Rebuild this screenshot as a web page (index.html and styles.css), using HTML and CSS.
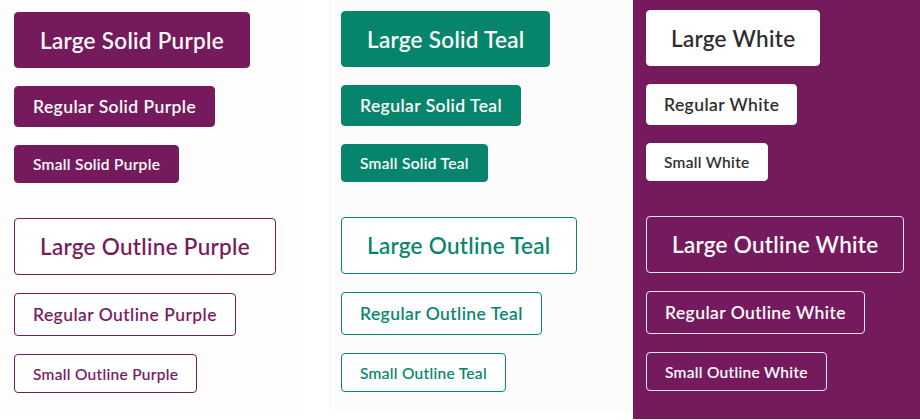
FILE: index.html
```html
<!DOCTYPE html>
<html>
<head>
<meta charset="utf-8">
<link rel="stylesheet" href="styles.css">
</head>
<body>
<div class="page">
  <section class="panel panel-left">
    <button class="btn lg solid-purple">Large Solid Purple</button>
    <button class="btn md solid-purple">Regular Solid Purple</button>
    <button class="btn sm solid-purple">Small Solid Purple</button>
    <button class="btn lg outline outline-purple group-start">Large Outline Purple</button>
    <button class="btn md outline outline-purple">Regular Outline Purple</button>
    <button class="btn sm outline outline-purple">Small Outline Purple</button>
  </section>
  <section class="panel panel-mid">
    <button class="btn lg solid-teal">Large Solid Teal</button>
    <button class="btn md solid-teal">Regular Solid Teal</button>
    <button class="btn sm solid-teal">Small Solid Teal</button>
    <button class="btn lg outline outline-teal group-start">Large Outline Teal</button>
    <button class="btn md outline outline-teal">Regular Outline Teal</button>
    <button class="btn sm outline outline-teal">Small Outline Teal</button>
  </section>
  <section class="panel panel-right">
    <button class="btn lg solid-white">Large White</button>
    <button class="btn md solid-white">Regular White</button>
    <button class="btn sm solid-white">Small White</button>
    <button class="btn lg outline outline-white group-start">Large Outline White</button>
    <button class="btn md outline outline-white">Regular Outline White</button>
    <button class="btn sm outline outline-white">Small Outline White</button>
  </section>
</div>
</body>
</html>
```

FILE: styles.css
```css
* { box-sizing: border-box; }
html, body { margin: 0; padding: 0; background: #ffffff; }
body {
  width: 920px;
  height: 420px;
  overflow: hidden;
  font-family: "Lato", "Liberation Sans", sans-serif;
}
.page {
  display: flex;
  align-items: flex-start;
  height: 420px;
}
.panel {
  display: flex;
  flex-direction: column;
  align-items: flex-start;
  gap: 18px;
}
.panel-left {
  width: 298px;
  height: 413px;
  padding: 12px 14px;
  background: #fdfdfd;
}
.panel-mid {
  width: 304px;
  height: 410px;
  margin-left: 31px;
  padding: 11px 12px;
  background: #fcfcfc;
}
.panel-right {
  width: 287px;
  height: 419px;
  padding: 10px 13px;
  background: #761a5e;
}

.btn {
  display: inline-flex;
  align-items: center;
  justify-content: center;
  font-family: inherit;
  font-weight: 500;
  border: 1px solid transparent;
  border-radius: 4px;
  white-space: nowrap;
  cursor: pointer;
  margin: 0;
  -webkit-text-stroke: 0.12px currentColor;
}
.panel .group-start { margin-top: 17px; }
.lg { height: 56px; padding: 0 25px; font-size: 22.5px; letter-spacing: 0.3px; }
.md { height: 41px; padding: 0 18px; font-size: 17.5px; letter-spacing: 0.45px; }
.sm { height: 38px; padding: 0 18px; font-size: 15.5px; letter-spacing: 0.3px; }
.outline.lg { height: 57px; }
.outline.md { height: 43px; }
.outline.sm { height: 39px; }
.solid-white.lg { padding: 0 24px; }
.solid-white.md, .solid-white.sm { padding: 0 17px; }

.solid-purple { background: #761a5e; border-color: #761a5e; color: #ffffff; }
.outline-purple { background: #ffffff; border-color: #761a5e; color: #761a5e; }
.solid-teal { background: #06856c; border-color: #06856c; color: #ffffff; }
.outline-teal { background: #ffffff; border-color: #06856c; color: #06856c; }
.solid-white { background: #ffffff; border-color: #ffffff; color: #2b2b2b; }
.outline-white { background: #761a5e; border-color: #f2e6ee; color: #ffffff; }
```
